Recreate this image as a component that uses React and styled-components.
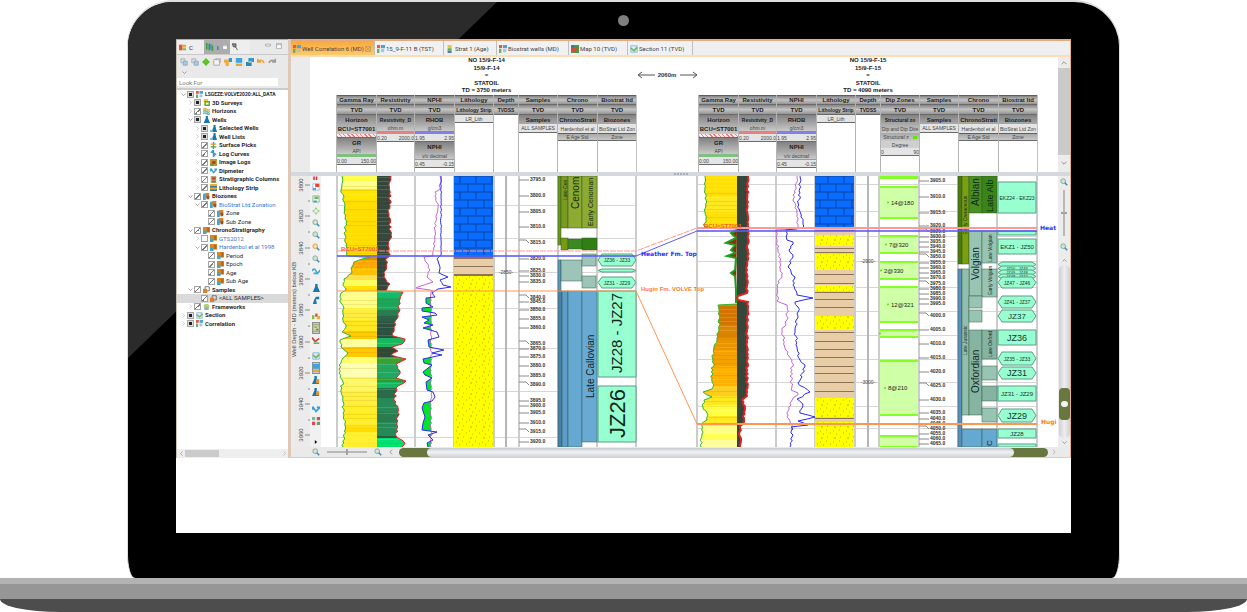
import { useState } from 'react';
import styled, { createGlobalStyle } from 'styled-components';

const GlobalStyle = createGlobalStyle`
  * {
    box-sizing: border-box;
  }
  body {
    margin: 0;
    background: #ffffff;
    color: #202020;
    font-family: "Liberation Sans", Arial, sans-serif;
    font-size: 6px;
  }
  button, input {
    font: inherit;
    color: inherit;
    margin: 0;
    padding: 0;
    border: 0;
    background: none;
    border-radius: 0;
  }
  svg {
    display: block;
  }
`;

/* ---------- laptop ---------- */

const Laptop = styled.div`
  overflow: hidden;
`;

const Lid = styled.div`
  position: relative;
  margin: 0 127px;
  padding: 37px 48px 45px;
  background: #000000;
  border: 1px solid #dedede;
  border-top-width: 2px;
  border-bottom: 0;
  border-radius: 46px 46px 8px 8px / 46px 46px 24px 24px;

  &::before {
    content: '';
    position: absolute;
    inset: 0;
    border-radius: 45px 45px 0 0;
    background: #2b2b2b;
    clip-path: polygon(0 0, 369px 0, 0 356px);
  }
`;

const Camera = styled.div`
  position: absolute;
  top: 13px;
  left: calc(50% - 6px);
  width: 11px;
  height: 11px;
  border-radius: 50%;
  background: #808080;
`;

const Screen = styled.div`
  position: relative;
  min-height: 494px;
  background: #ffffff;
`;

const Base = styled.div`
  height: 34px;
  background: linear-gradient(#b3b3b3 0 6px, #969696 6px 21px, #4d4d4d 21px);
  border-radius: 0 0 60px 60px / 0 0 13px 13px;
`;

/* ---------- application frame ---------- */

const Application = styled.div`
  display: flex;
  overflow: hidden;
`;

const Sidebar = styled.aside`
  flex: 0 0 112px;
  min-width: 0;
  overflow: hidden;
  display: flex;
  flex-direction: column;
  background: #e9e9e9;
  border-top: 1px solid #b9ab9a;
  border-left: 1px solid #c9c0b4;
  font-family: Roboto, "Liberation Sans", sans-serif;
`;

const Main = styled.main`
  flex: 1;
  min-width: 0;
  display: flex;
  flex-direction: column;
  border-left: 3px solid #dfc9b6;
  border-right: 1px solid #e9b080;
  border-bottom: 1px solid #e6cbb4;
`;

const Row = styled.div`
  display: flex;
  height: ${({height}) => height}px;
`;

/* ---------- sidebar ---------- */

const SideTabs = styled.div`
  display: flex;
  height: 15px;
  border-bottom: 1px solid #c9c9c9;
`;

const SideTab = styled.button`
  display: flex;
  align-items: center;
  gap: 3px;
  width: ${({width}) => width}px;
  padding-left: 2px;
  background: ${({active}) => active ? '#adadad' : '#eeeeee'};
`;

const WindowButtons = styled.div`
  margin-left: auto;
  display: flex;
  gap: 3px;
  padding: 2px 5px 0 0;
`;

const IconButton = styled.button`
  display: flex;
  align-items: center;
  justify-content: center;
  flex: 0 0 ${({size}) => size || 10}px;
  height: ${({size}) => size || 10}px;
  background: ${({active}) => active ? '#c8c8c8' : 'transparent'};
  box-shadow: ${({active}) => active ? 'inset 0 0 0 1px #8f8f8f' : 'none'};
`;

const Tools = styled.div`
  display: flex;
  flex-wrap: wrap;
  align-content: flex-start;
  column-gap: 1px;
  height: 23px;
  padding: 2px 1px 0 2px;
`;

const Search = styled.input`
  width: 101px;
  height: 8px;
  padding: 0 2px;
  background: #ffffff;

  &::placeholder {
    color: #777777;
  }
`;

const TreeArea = styled.div`
  flex: 1;
  margin-top: 2px;
  border-top: 2px solid #cccccc;
  background: #ffffff;
`;

const Tree = styled.ul`
  list-style: none;
  margin: 0;
  padding: 0;
  height: 238px;
  display: grid;
  grid-auto-rows: 1fr;
`;

const TreeRow = styled.li`
  display: flex;
  align-items: center;
  padding-left: ${({level}) => 2 + level * 7}px;
  background: ${({selected}) => selected ? '#dadada' : 'transparent'};
`;

const Twisty = styled.button`
  flex: none;
  width: 8px;
  height: 8px;
  display: flex;
  align-items: center;
  justify-content: center;
  visibility: ${({shown}) => shown ? 'visible' : 'hidden'};
`;

const TreeLabel = styled.label`
  display: flex;
  align-items: center;
  gap: 2px;
  white-space: nowrap;
  line-height: 8px;
  font-size: ${({small}) => small ? 5 : 6}px;
  font-weight: ${({strong}) => strong ? 'bold' : 'normal'};
  color: ${({link}) => link ? '#3f78cf' : '#2a2a2a'};
`;

const Check = styled.input`
  appearance: none;
  width: 7px;
  height: 7px;
  border: 1px solid #a5a5a5;
  background: #ffffff;

  &:checked {
    background: linear-gradient(135deg, #ffffff 45%, #777777 45% 60%, #ffffff 60%);
  }

  &:indeterminate {
    background: #222222;
    box-shadow: inset 0 0 0 1px #dddddd;
  }
`;

const SideScroll = styled.div`
  display: flex;
  align-items: center;
  justify-content: space-between;
  height: 9px;
  background: #eeeeee;
`;

const SideThumb = styled.div`
  width: 34px;
  height: 7px;
  margin-right: auto;
  background: #cbcbcb;
`;

/* ---------- editor tabs ---------- */

const EditorTabs = styled.div`
  display: flex;
  height: 16px;
  background: #efefef;
  border-top: 2px solid #e5aa7c;
  font-family: Roboto, "Liberation Sans", sans-serif;
`;

const EditorTab = styled.button`
  display: flex;
  align-items: center;
  gap: 1px;
  flex: 0 0 ${({width}) => width}px;
  padding: 1px 3px 0 2px;
  white-space: nowrap;
  color: #444444;
  border-right: 1px solid #bfbfbf;
  background: ${({active}) => active ? 'linear-gradient(#f7a93c, #ffc96a)' : '#f1f1f1'};
`;

const TabStrip = styled.div`
  height: 2px;
  background: #ffdcb4;
`;

/* ---------- track headers ---------- */

const Gutter = styled.div`
  flex: 0 0 19px;
  background: #ebebeb;
`;

const HeaderTracks = styled.div`
  flex: 1;
  min-width: 0;
  overflow: hidden;
  display: flex;
  padding-left: 26px;
  background: #ffffff;
`;

const WellHeader = styled.section`
  display: flex;
  flex-direction: column;
  flex: none;
`;

const WellTitle = styled.div`
  display: grid;
  grid-auto-rows: 1fr;
  height: 38px;
  text-align: center;
  font-weight: bold;
  line-height: 7px;
`;

const Distance = styled.div`
  flex: 0 0 61px;
  padding-top: 13px;
`;

const Columns = styled.div`
  flex: 1;
  display: flex;
  border-right: 1px solid #c4c4c4;
`;

const Column = styled.div`
  width: ${({width}) => width}px;
  border-left: 1px solid #b4b4b4;
`;

const Cell = styled.div`
  display: flex;
  align-items: center;
  justify-content: ${({split}) => split ? 'space-between' : 'center'};
  height: ${({height}) => height}px;
  overflow: hidden;
  white-space: nowrap;
  background: ${({shade}) => shade};
  border-bottom: ${({edge}) => edge ? '1px solid #6a6a6a' : '0'};
  border-top: ${({top}) => top ? '1px solid #5f5f5f' : '0'};
  font-weight: ${({strong}) => strong ? 'bold' : 'normal'};
  font-size: ${({strong, small}) => strong && !small ? 6 : 5}px;
  color: ${({strong}) => strong ? '#1c1c1c' : '#444444'};
`;

const Splitter = styled.div`
  display: flex;
  justify-content: center;
  align-items: center;
  gap: 1px;
  height: 4px;
  background: #d5d8df;
`;

const Grip = styled.span`
  width: 2px;
  height: 2px;
  background: #a9afba;
`;

/* ---------- rails and bars round the plot ---------- */

const Rail = styled.div`
  flex: 0 0 12px;
  display: flex;
  flex-direction: column;
  align-items: center;
  background: #ececec;
`;

const RailThumb = styled.div`
  width: 12px;
  height: 87px;
  background: #cacaca;
`;

const RailTrack = styled.div`
  display: flex;
  flex-direction: column;
  justify-content: flex-end;
  flex: 1;
  width: 11px;
  padding-bottom: 18px;
  border-radius: 5px;
  background: linear-gradient(90deg, #cfcfd4, #eeeef2, #cfcfd4);
`;

const RailHandle = styled.div`
  display: flex;
  align-items: center;
  justify-content: center;
  height: 32px;
  border-radius: 4px;
  background: #68773f;

  &::before {
    content: '';
    width: 7px;
    height: 6px;
    border-radius: 3px;
    background: #f2f2f2;
  }
`;

const ToolColumn = styled.div`
  flex: 0 0 11px;
  display: flex;
  flex-direction: column;
  align-items: center;
  background: #f1f1f1;
`;

const ToolGap = styled.div`
  height: ${({size}) => size}px;
`;

const Plot = styled.div`
  flex: 1;
  min-width: 0;
  overflow: hidden;
  background: #ffffff;
`;

const BottomBar = styled.div`
  display: flex;
  align-items: center;
  height: 10px;
  padding: 0 10px 0 20px;
  background: #eaeaea;
`;

const Zoom = styled.input`
  appearance: none;
  width: ${({vertical}) => vertical ? 9 : 40}px;
  height: ${({vertical}) => vertical ? 46 : 8}px;
  margin: ${({vertical}) => vertical ? '3px 0' : '0 6px'};
  writing-mode: ${({vertical}) => vertical ? 'vertical-lr' : 'horizontal-tb'};
  background: linear-gradient(#b8b8b8, #b8b8b8) center / ${({vertical}) => vertical ? '2px 100%' : '100% 2px'} no-repeat;

  &::-webkit-slider-thumb {
    appearance: none;
    width: ${({vertical}) => vertical ? 6 : 2}px;
    height: ${({vertical}) => vertical ? 2 : 6}px;
    background: #a2a2a2;
  }
`;

const Scroll = styled.div`
  flex: 1;
  display: flex;
  justify-content: space-between;
  height: 9px;
  border-radius: 5px;
  overflow: hidden;
  background: #68773f;
  padding: 0 34px 0 28px;
`;

const ScrollTrack = styled.div`
  flex: 1;
  border-radius: 5px;
  background: linear-gradient(#c6c9d0, #f1f2f5 45%, #d2d4da);
`;

/* ---------- icons ---------- */

const glyphs = {
  grid: <><path fill="#e05a48" d="M0 0h4v4H0z"/><path fill="#4aa3df" d="M5 0h5v4H5z"/><path fill="#63b35f" d="M0 5h3v5H0z"/><path fill="#9cc7e8" d="M5 5h4v4H5z"/></>,
  correlation: <><path d="M1 0v10M8 0v10" stroke="#3c8ed0" strokeWidth="2"/><path d="M1 2h7M1 6l7-2" stroke="#e0654a" strokeWidth="2"/></>,
  explorer: <><path d="M1 0v8M4 1v8M8 3v7" stroke="#3f9b46" strokeWidth="2"/><path d="M6 1v7" stroke="#4a93c8" strokeWidth="2"/></>,
  data: <><path fill="#e0562d" d="M0 1h5v8H0z"/><path fill="#eda83a" d="M5 1h5v4H5z"/><path fill="#8dba43" d="M5 6h5v3H5z"/></>,
  strat: <><path fill="#f0c341" d="M2 0h5v4H2z"/><path fill="#6eb04c" d="M2 4h5v3H2z"/><path fill="#4a7db8" d="M2 7h5v3H2z"/></>,
  map: <><path fill="#3f9b46" d="M0 0h10v10H0z"/><path fill="#e5482f" d="M3 2l5 3-3 5-5-4z"/><path fill="#3579c5" d="M0 0h4v4H0z"/></>,
  section: <><path fill="#dcebf5" stroke="#7ab2d6" d="M1 1h8v8H1z"/><path d="M1 4l4 3 4-4" fill="none" stroke="#70b85b" strokeWidth="2"/></>,
  surface: <><path fill="#e6f0e4" stroke="#8fb8a0" d="M1 1h8v8H1z"/><path fill="#6fb55a" d="M3 2h5v3H3z"/><path fill="#4f93bd" d="M2 7h4v2H2z"/></>,
  well: <path fill="#1878ae" d="M4 0h3v3l3 7H1l3-7z"/>,
  wellAdd: <><path fill="#1878ae" d="M5 0h3v3l2 7H2l3-7z"/><path fill="#7fbfe0" d="M0 7h4v3H0z"/></>,
  wellMove: <><path fill="#1878ae" d="M5 1h4v3H5l1 6H1l2-6z"/></>,
  wellEdit: <><path fill="#1878ae" d="M3 0h3v3l3 7H0l3-7z"/><path fill="#d6953a" d="M5 4h4v5H5z"/></>,
  survey: <><path fill="#e8cb28" d="M1 0h6v5H1z"/><path fill="none" stroke="#68a81d" strokeWidth="2" d="M3 4h6v5H3z"/></>,
  horizon: <><path d="M0 2q3-2 5 0t5 0" stroke="#e7a33d" strokeWidth="2" fill="none"/><path d="M0 5q3-2 5 0t5 0" stroke="#75bc62" strokeWidth="2" fill="none"/><path d="M0 8q3-2 5 0t5 0" stroke="#52aede" strokeWidth="2" fill="none"/></>,
  picks: <><path d="M5 0v10" stroke="#3d97ca" strokeWidth="2"/><path d="M1 3h8" stroke="#e5a22a" strokeWidth="2"/><path d="M1 7h8" stroke="#57a95d" strokeWidth="2"/></>,
  curve: <path d="M5 0L2 3l6 3-4 4M5 0v10" stroke="#3d94d0" strokeWidth="2" fill="none"/>,
  image: <><path fill="#c79638" d="M0 0h10v10H0z"/><path fill="#a8442d" d="M3 3h5v4H3z"/><path fill="#739b31" d="M0 7h5v3H0z"/></>,
  dip: <path d="M1 2l4 6 5-5M1 2v4M6 3h4" stroke="#32a0db" strokeWidth="2" fill="none"/>,
  column: <><path fill="#b8a47a" d="M1 0h8v10H1z"/><path fill="#bf3c36" d="M3 2h5v3H3z"/><path fill="#5c7c40" d="M3 7h5v2H3z"/></>,
  strip: <><path fill="#e5ae37" d="M0 0h10v10H0z"/><path fill="#41729a" d="M0 3h10v2H0zM0 8h10v2H0z"/></>,
  zone: <><path fill="#43a6d8" d="M0 1h4v9H0z"/><path fill="#d9822d" d="M3 0h6v7H3z"/><path fill="#8a5b32" d="M5 4h4v5H5z"/></>,
  chrono: <><path fill="#da8526" d="M0 0h10v8H0z"/><path fill="#3baac9" d="M0 5h5v5H0z"/><path fill="#b5651e" d="M6 1h3v6H6z"/></>,
  sample: <><path fill="none" stroke="#4c4c4c" d="M3 1h6v6H3z"/><path fill="#d9822d" d="M0 4h6v6H0z"/></>,
  frame: <><circle cx="5" cy="5" r="4" fill="#b8cf74"/><path fill="#7db5cf" d="M2 6h6v4H2z"/></>,
  plus: <path fill="#5fc224" d="M5 0l3 3 2 2-2 2-3 3-3-3-2-2 2-2z"/>,
  page: <path fill="#f5f5f5" stroke="#9b9b9b" d="M1 2h7v7H1zM4 2V0h5v6"/>,
  pages: <><path fill="#d6dfe6" stroke="#a2acb4" d="M1 1h5v5H1z"/><path fill="#a9cbe0" stroke="#83a8bf" d="M4 4h5v5H4z"/></>,
  open: <><path fill="#f0ac3b" d="M0 2h6v4H0zM2 6h4v4H2z"/><path fill="#3597cd" d="M6 0h4v5H6z"/></>,
  save: <><path fill="#3da4dd" d="M1 0h8v6H1z"/><path fill="#e4a83c" d="M1 7h8v3H1z"/></>,
  layers: <><path fill="#3597cd" d="M3 0h7v5H3z"/><path fill="#2f86b4" d="M0 5h7v5H0z"/><path fill="#a9d4a0" d="M3 4h4v2H3z"/></>,
  undo: <path d="M1 5q4-5 8 1M1 1v4h4" stroke="#efa13a" strokeWidth="2" fill="none"/>,
  redo: <path d="M9 5q-4-5-8 1M9 1v4H5" stroke="#9b9b9b" strokeWidth="2" fill="none"/>,
  marks: <path d="M2 1v7M7 1v7" stroke="#dc2c2c" strokeWidth="3"/>,
  redpage: <><path fill="#ffffff" stroke="#a3bdd0" d="M1 1h8v8H1z"/><path fill="#e04733" d="M4 1h5v4H4z"/><path fill="#5aaad6" d="M1 6h4v3H1z"/></>,
  move: <path d="M5 0L3 3h4zM5 10L3 7h4zM0 5l3-2v4zM10 5L7 3v4z" fill="#8fd070"/>,
  zoom: <><circle cx="4" cy="4" r="3" fill="#cfe5d3" stroke="#7fa093"/><path d="M6 6l3 3" stroke="#3b8dbd" strokeWidth="2"/></>,
  zoomFit: <><circle cx="4" cy="4" r="3" fill="#f5d9a8" stroke="#e0a04a"/><path d="M6 6l3 3" stroke="#3b8dbd" strokeWidth="2"/></>,
  wave: <path d="M0 5q3-5 5 0t5-1M2 8h6" stroke="#43a3d8" strokeWidth="2" fill="none"/>,
  bars: <><path fill="#8dba43" d="M0 4h3v5H0z"/><path fill="#d9542d" d="M4 2h3v4H4z"/><path fill="#e9b13b" d="M6 5h4v4H6z"/></>,
  trend: <><path d="M0 2l4 5 5-4" stroke="#cc4433" strokeWidth="2" fill="none"/><path d="M2 9h7" stroke="#63b35f" strokeWidth="2"/></>,
  facies: <><path fill="#c9d8a8" stroke="#8a9a70" d="M1 1h8v8H1z"/><path fill="#d98a4a" d="M3 3h3v2H3z"/><path fill="#5a9a4a" d="M5 6h3v2H5z"/></>,
  squares: <><path fill="#7ab8a0" d="M0 0h4v4H0z"/><path fill="#d8485a" d="M6 0h4v4H6zM0 6h4v4H0z"/><path fill="#63a35f" d="M6 6h4v4H6z"/></>,
  right: <path d="M3 1l4 4-4 4" stroke="#9a9a9a" fill="none" strokeWidth="1"/>,
  left: <path d="M7 1L3 5l4 4" stroke="#666666" fill="none" strokeWidth="1"/>,
  down: <path d="M1 3l4 4 4-4" stroke="#555555" fill="none" strokeWidth="1"/>,
  up: <path d="M1 7l4-4 4 4" stroke="#555555" fill="none" strokeWidth="1"/>,
  min: <path d="M1 2h8v3H1z" stroke="#888888" fill="#ffffff"/>,
  max: <path d="M1 1h8v8H1zM1 3h8" stroke="#888888" fill="#ffffff"/>,
  close: <path d="M1 1h8v8H1zM1 1l8 8M9 1L1 9" stroke="#a98d5e" fill="none"/>,
  pin: <path d="M0 1h5v4H2zM4 4l3 5" stroke="#555555" fill="#888888"/>,
  play: <path d="M2 0l6 5-6 5z" fill="#111111"/>,
};

const Glyph = ({name, size = 8}) => (
  <svg width={size} height={size} viewBox="0 0 10 10" aria-hidden="true">{glyphs[name]}</svg>
);

/* ---------- data ---------- */

// level, label, icon, arrow, state, style
const treeItems = [
  [0, 'LSGEZE:VOLVE2020:ALL_DATA', 'grid', 'down', 'some', 'strong'],
  [1, '3D Surveys', 'survey', 'right', 'some', 'strong'],
  [1, 'Horizons', 'horizon', 'right', 'on', 'strong'],
  [1, 'Wells', 'well', 'down', 'some', 'strong'],
  [2, 'Selected Wells', 'wellAdd', 'right', 'some', 'strong'],
  [2, 'Well Lists', 'wellAdd', 'right', 'some', 'strong'],
  [2, 'Surface Picks', 'picks', 'right', 'on', 'strong'],
  [2, 'Log Curves', 'curve', 'right', 'on', 'strong'],
  [2, 'Image Logs', 'image', 'right', 'on', 'strong'],
  [2, 'Dipmeter', 'dip', 'right', 'on', 'strong'],
  [2, 'Stratigraphic Columns', 'column', 'right', 'on', 'strong'],
  [2, 'Lithology Strip', 'strip', 'right', 'on', 'strong'],
  [1, 'Biozones', 'zone', 'down', 'on', 'strong'],
  [2, 'BioStrat Ltd Zonation', 'zone', 'down', 'on', 'link'],
  [3, 'Zone', 'zone', '', 'on', ''],
  [3, 'Sub Zone', 'zone', '', 'on', ''],
  [1, 'ChronoStratigraphy', 'chrono', 'down', 'on', 'strong'],
  [2, 'GTS2012', 'chrono', 'right', 'off', 'link'],
  [2, 'Hardenbol et al 1998', 'chrono', 'down', 'on', 'link'],
  [3, 'Period', 'chrono', '', 'on', ''],
  [3, 'Epoch', 'chrono', '', 'on', ''],
  [3, 'Age', 'chrono', '', 'on', ''],
  [3, 'Sub Age', 'chrono', '', 'on', ''],
  [1, 'Samples', 'sample', 'down', 'on', 'strong'],
  [2, '<ALL SAMPLES>', 'sample', '', 'on', 'selected'],
  [1, 'Frameworks', 'frame', 'right', 'on', 'strong'],
  [0, 'Section', 'section', 'right', 'some', 'strong'],
  [0, 'Correlation', 'grid', 'right', 'some', 'strong'],
];

const editorTabs = [
  ['Well Correlation 6 (MD)', 'grid', 84],
  ['15_9-F-11 B (TST)', 'grid', 69],
  ['Strat 1 (Age)', 'strat', 53],
  ['Biostrat wells (MD)', 'grid', 72],
  ['Map 10 (TVD)', 'map', 59],
  ['Section 11 (TVD)', 'section', 65],
];

const steel = 'linear-gradient(#858585, #c4c4c4 50%, #959595)';
const dark = 'linear-gradient(#828282, #a9a9a9)';
const mid = 'linear-gradient(#a9a9a9, #c9c9c9)';
const pale = '#e4e4e4';
const hatch = 'repeating-linear-gradient(45deg, #f08080 0 1px, #fbe9e9 1px 3px)';

const head = text => ({text, height: 9, shade: dark, strong: true});
const sub = (text, shade = mid) => ({text, height: 7, shade});
const bar = (color, height = 3) => ({height, shade: color});
const scale = (from, to) => ({text: [from, to], height: 8, shade: pale, edge: true});

const gamma = {width: 40, title: 'Gamma Ray', cells: [
  head('Horizon'), {...head('BCU=ST7001'), shade: mid, height: 10}, {height: 4, shade: hatch, edge: true},
  head('GR'), sub('API'), bar('#7fbf7f'), scale('0.00', '150.00'),
]};
const resistivity = {width: 38, title: 'Resistivity', cells: [
  {...head('Resistivity_D'), small: true}, sub('ohm.m'), bar('#e88080'), scale('0.20', '2000.0'),
]};
const nphi = {width: 40, title: 'NPHI', cells: [
  head('RHOB'), sub('g/cm3'), bar('#8080e8'), scale('1.95', '2.95'),
  {...head('NPHI'), height: 10}, sub('v/v decimal'), bar('#c878d0', 1), scale('0.45', '-0.15'),
]};
const lithology = {width: 39, title: 'Lithology', second: 'Lithology Strip', cells: [{text: 'LR_Lith', height: 8, shade: pale, edge: true}]};
const depth = {width: 25, title: 'Depth', second: 'TVDSS', cells: []};
const samples = {width: 39, title: 'Samples', cells: [head('Samples'), {...sub('ALL SAMPLES', pale), height: 9, edge: true}]};
const chrono = {width: 40, title: 'Chrono', cells: [head('ChronoStrati'), {...sub('Hardenbol et al', pale), height: 9}, {...sub('E  Age  Std'), height: 8, edge: true, top: true}]};
const biostrat = {width: 39, title: 'Biostrat ltd', cells: [head('Biozones'), {...sub('BioStrat Ltd Zon', pale), height: 9}, {...sub('Zone'), height: 8, edge: true, top: true}]};
const dipZones = {width: 39, title: 'Dip Zones', cells: [
  {...head('Structural zo'), small: true}, {...sub('Dip and Dip Dire'), height: 9}, {...sub('Structural z'), height: 8, accent: true}, sub('Degree', '#cfcfcf'), scale('0', '90'),
]};

const wells = [
  {lines: ['NO 15/9-F-14', '15/9-F-14', '=', 'STATOIL', 'TD = 3750 meters'],
    columns: [gamma, resistivity, nphi, lithology, depth, samples, chrono, biostrat]},
  {lines: ['NO 15/9-F-15', '15/9-F-15', '=', 'STATOIL', 'TD = 4090 meters'],
    columns: [gamma, resistivity, nphi, lithology, depth, dipZones, samples, chrono, biostrat]},
];

/* ---------- plot helpers ---------- */

const noise = n => {
  const v = Math.sin(n * 127.1) * 43758.5453;
  return v - Math.floor(v);
};

// adds points between the picks of a log, so that it reads as a measured curve
const roughen = (points, amount, step = 2) => {
  const out = [];
  points.forEach(([x, y], i) => {
    out.push([x, y]);
    const next = points[i + 1];
    if (!next) return;
    const count = Math.floor((next[1] - y) / step);
    for (let k = 1; k < count; k++) {
      const t = k / count;
      out.push([x + (next[0] - x) * t + (noise(y + k) - 0.5) * amount, y + (next[1] - y) * t]);
    }
  });
  return out;
};

const toPath = points => points.map(([x, y]) => `${x.toFixed(1)} ${y.toFixed(1)}`).join(' L');

const Log = ({points, color, width = 1}) => (
  <path d={`M${toPath(points)}`} fill="none" stroke={color} strokeWidth={width}/>
);

// colour bands from a fixed edge up to a curve; bands: [top, colour]
const Filled = ({id, points, edge, bands, bottom = 447}) => (
  <>
    <clipPath id={id}>
      <path d={`M${edge} ${points[0][1]} L${toPath(points)} L${edge} ${points[points.length - 1][1]}Z`}/>
    </clipPath>
    <g clipPath={`url(#${id})`}>
      {bands.map(([y, color], i) => {
        const end = bands[i + 1] ? bands[i + 1][0] : bottom;
        return (
          <g key={y}>
            <rect x={edge - 45} y={y} width="90" height={end - y} fill={color}/>
            {Array.from({length: Math.floor((end - y) / 4)}, (_, k) => (
              <rect key={k} x={edge - 45} y={y + k * 4 + 1} width="90" height="1" fill={noise(y + k) > 0.5 ? '#ffffff' : '#a06000'} opacity="0.14"/>
            ))}
          </g>
        );
      })}
    </g>
  </>
);

const gr1 = roughen([[342, 176], [342, 184], [341, 190], [344, 197], [345, 205], [344, 213], [346, 223], [345, 235], [345, 242], [347, 248], [347, 256], [370, 257.5], [362, 259], [354, 262], [351, 268], [352, 273], [344, 279], [343, 284], [346, 290], [341, 293], [341, 303], [344, 308], [343, 314], [343, 320], [346, 327], [342, 332], [351, 336], [340, 340], [341, 347], [348, 353], [343, 358], [341, 363], [339, 373], [343, 382], [341, 390], [343, 397], [343, 413], [345, 423], [344, 437], [343, 447]], 3);
const gr1Bands = [[176, '#ffff50'], [181, '#ffff85'], [189, '#ffe800'], [200, '#ffdd00'], [257, '#e08a00'], [260, '#ffa500'], [268, '#ffc000'], [275, '#ffe040'], [280, '#ffff60'], [286, '#ffe000'], [291, '#ffff88'], [308, '#ffee40'], [320, '#ffe820'], [331, '#ffcc00'], [339, '#ffff98'], [347, '#ffc800'], [357, '#ffff70'], [363, '#ffffb0'], [377, '#fff860'], [391, '#fff040'], [405, '#ffee20'], [425, '#ffdd00'], [432, '#ffee30']];

const res1 = roughen([[391, 176], [389, 184], [390, 200], [389, 215], [391, 235], [389, 250], [389, 257], [387, 258], [386, 270], [384, 277], [390, 284], [387, 289], [386, 291], [403, 292], [400, 299], [398, 306], [399, 312], [396, 320], [394, 327], [393, 336], [405, 339], [402, 344], [392, 347], [398, 351], [391, 355], [406, 359], [396, 364], [400, 371], [396, 378], [406, 381], [398, 386], [396, 392], [394, 400], [398, 408], [397, 425], [396, 436], [402, 440], [405, 443], [402, 447]], 3);
const res1Bands = [[176, '#34473a'], [291, '#12bb68'], [298, '#1fa45c'], [310, '#287c50'], [316, '#2c6046'], [322, '#2c5040'], [338, '#18b860'], [347, '#2d4a3a'], [357, '#3aa030'], [363, '#1fa860'], [378, '#309838'], [382, '#18b860'], [388, '#2a6a48'], [398, '#258a58'], [412, '#287c50'], [422, '#258a58'], [436, '#2a5a44'], [438, '#00e070']];

const nphi1 = roughen([[440, 176], [441, 180], [439, 190], [435, 192], [436, 198], [438, 207], [436, 217], [435, 230], [435, 240], [433, 252], [433, 256], [424, 257], [427, 263], [430, 270], [427, 277], [433, 282], [418, 287], [416, 288], [430, 290], [433, 291], [431, 292], [431, 447]], 2);
const rhob1Top = roughen([[441, 176], [441, 255], [437, 259], [440, 267], [439, 273], [448, 277], [440, 280], [443, 285], [451, 287], [438, 289], [432, 293]], 1);
const rhob1Low = [[432, 293], [435, 297], [426, 298], [426, 303], [433, 307], [422, 308], [422, 311], [435, 313], [437, 315], [422, 317], [429, 320], [424, 323], [433, 325], [423, 328], [437, 332], [439, 337], [428, 340], [429, 347], [444, 350], [432, 353], [442, 355], [423, 359], [424, 363], [432, 365], [423, 372], [425, 375], [432, 378], [426, 382], [427, 390], [433, 392], [435, 397], [432, 401], [424, 403], [422, 408], [425, 417], [423, 423], [422, 430], [437, 432], [428, 435], [433, 440], [427, 443], [428, 447]];

const gr2Top = roughen([[705, 176], [705, 190], [706, 200], [705, 212], [706, 220], [704, 226], [712, 228], [737, 229]], 2);
const gr2Mid = [[737, 230], [731, 233], [736, 238], [732, 240], [726, 243], [735, 245], [731, 250], [735, 253], [727, 256], [736, 258], [735, 270], [731, 273], [735, 276], [736, 290], [736, 303]];
const gr2Low = roughen([[737, 304], [718, 305], [719, 312], [719, 330], [717, 338], [714, 347], [713, 360], [712, 378], [712, 389], [703, 392], [712, 397], [704, 400], [703, 407], [708, 415], [707, 420], [701, 424], [702, 434], [701, 447]], 3);
const gr2Bands = [[304, '#d27400'], [325, '#dc8400'], [338, '#e99500'], [350, '#f5a200'], [366, '#ffb000'], [386, '#ffcc20'], [396, '#ffe820'], [405, '#ffff40'], [416, '#ffe820'], [424, '#ffff88'], [434, '#ffff55'], [440, '#ffffa0']];
const res2 = roughen([[748, 176], [747, 200], [748, 230], [748, 250], [747, 270], [747, 293], [738, 296], [738, 300], [748, 302], [747, 330], [747, 360], [747, 396], [742, 400], [745, 408], [743, 416], [744, 422], [740, 426], [740, 447]], 2);
const nphi2 = roughen([[797, 176], [796, 187], [793, 195], [795, 203], [797, 210], [797, 229], [776, 230], [777, 240], [778, 250], [780, 263], [782, 277], [777, 285], [777, 301], [787, 305], [787, 320], [782, 330], [785, 348], [792, 360], [791, 390], [798, 393], [790, 403], [787, 417], [792, 425], [791, 430]], 3);
const rhob2 = roughen([[800, 176], [800, 193], [798, 203], [801, 217], [803, 222], [803, 228], [786, 230], [787, 240], [793, 242], [789, 250], [793, 257], [788, 267], [795, 277], [793, 285], [797, 295], [813, 298], [795, 302], [798, 307], [798, 312], [795, 330], [797, 347], [800, 360], [805, 367], [798, 383], [810, 392], [797, 399], [803, 405], [800, 413], [815, 417], [798, 421], [808, 425], [791, 427], [793, 435], [790, 447]], 3);

const labels1 = [179, 195, 211, 226, 242, 258, 270, 275, 281, 297, 301, 309, 318, 327, 343, 348, 356, 365, 375, 384, 400, 405, 412, 422, 431, 441];
const labels2 = [180, 196, 212, 225, 231, 236, 241, 246, 251, 256, 262, 267, 272, 277, 283, 288, 293, 298, 303, 315, 329, 343, 357, 371, 385, 399, 412, 418, 423, 428, 433, 438, 443];

// x, top, width, bottom, fill
const chronoBlocks = [
  [558, 176, 3, 245, '#6a9a10'], [561, 176, 7, 228, '#7a9a20'], [568, 176, 14, 228, '#8cab30'], [582, 176, 15, 228, '#8cab30'],
  [561, 238, 7, 250, '#789a10'], [568, 239, 14, 249, '#3a8a20'], [582, 238, 15, 250, '#2f7f14'],
  [558, 260, 3, 291, '#5a9ac4'], [561, 260, 21, 281, '#9cc4b8'], [582, 254, 14, 266, '#9cc4b8'], [582, 276, 14, 288, '#9cc4b8'],
  [558, 291, 4, 447, '#4a80a8'], [562, 291, 6, 447, '#5c9cc8'], [568, 291, 14, 447, '#65a8d2'], [582, 291, 15, 442, '#68aad4'],
  [958, 176, 4, 264, '#4a7a10'], [962, 176, 7, 264, '#7aa010'], [969, 176, 13, 213, '#4a9020'], [982, 176, 15, 213, '#3a8518'],
  [969, 231, 13, 296, '#98c4b4'], [982, 231, 15, 263, '#98c4b4'], [982, 269, 15, 297, '#98c4b4'],
  [958, 269, 4, 447, '#5a90c0'], [962, 269, 7, 415, '#90bfae'], [969, 296, 13, 308, '#98c4b4'], [969, 310, 13, 322, '#98c4b4'],
  [969, 330, 13, 415, '#86b4a2'], [982, 330, 15, 359, '#86b4a2'], [982, 366, 15, 380, '#98c4b4'], [982, 386, 15, 401, '#86b4a2'], [982, 408, 15, 422, '#98c4b4'],
  [962, 429, 20, 447, '#65a8d2'], [982, 429, 15, 447, '#65a8d2'],
];

// x, top, bottom, lozenge, label, size
const biozones = [
  [598, 254, 266, true, 'JZ36 - JZ33', 5], [598, 269, 272, true], [598, 277, 288, true, 'JZ31 - JZ29', 5],
  [598, 291, 377, false], [598, 386, 442, false],
  [998, 182, 213, false, 'EKZ24 - EKZ23', 5], [998, 231, 235, false], [998, 239, 254, false, 'EKZ1 - JZ50', 6],
  [998, 262, 267, true], [998, 266, 271, true, 'JZ50 - JZ49', 4], [998, 270, 275, true, 'JZ49 - JZ48', 4], [998, 274, 279, true, 'JZ48 - JZ47', 4],
  [998, 277, 288, true, 'JZ47 - JZ46', 5], [998, 296, 308, true, 'JZ41 - JZ37', 5], [998, 310, 322, true, 'JZ37', 8],
  [998, 330, 345, false, 'JZ36', 9], [998, 352, 365, true, 'JZ35 - JZ33', 5], [998, 367, 379, true, 'JZ31', 9],
  [998, 386, 401, false, 'JZ31 - JZ29', 6], [998, 409, 422, true, 'JZ29', 9], [998, 429, 438, false, 'JZ28', 6], [998, 444, 447, false],
];

const verticalTexts = [
  [567, 200, 5, 'Late Cen'], [579, 209, 10, 'Cenom'], [593, 226, 7, 'Early Cenoman'], [594, 398, 10, 'Late Callovian'],
  [622, 373, 15, 'JZ28 - JZ27'], [625, 438, 22, 'JZ26'],
  [967, 234, 5, 'Early Cretaceous'], [979, 206, 10, 'Albian'], [993, 212, 9, 'Late Alb'],
  [979, 280, 10, 'Volgian'], [992, 262, 5, 'Late Volgian'], [992, 295, 5, 'Early Volgian'], [979, 393, 10, 'Oxfordian'],
  [967, 355, 5, 'Late Jurassic'], [992, 357, 5, 'Late Oxford'], [992, 446, 8, 'C'],
];

const dipBlocks = [[176, 179], [186, 219, '14@180', 891], [235, 254, '7@320', 889], [261, 280, '2@330', 884], [286, 323, '12@321', 891], [329, 338, '', 883], [360, 416, '8@210', 888], [435, 448]];

const Sand = ({x, top, bottom}) => <rect x={x} y={top} width="39" height={bottom - top} fill="url(#sand)"/>;

const Lithology = ({x, limeEnd, tan, yellow, lines}) => (
  <g>
    <rect x={x} y="176" width="39" height={limeEnd - 176} fill="url(#brick)"/>
    {tan.map(([top, bottom]) => <rect key={top} x={x} y={top} width="39" height={bottom - top} fill="#e8cda6"/>)}
    {yellow.map(([top, bottom]) => <Sand key={top} x={x} top={top} bottom={bottom}/>)}
    {lines.map(y => <rect key={y} x={x} y={y} width="39" height="1" fill="#8c7458"/>)}
  </g>
);

const SampleLabels = ({x, values, start}) => (
  <g fontSize="5" fontWeight="bold" fill="#333333">
    {values.map((y, i) => (
      <g key={y}>
        <path d={`M${x} ${y + (i % 5 === 4 ? -2 : 1)}h7l3 ${i % 5 === 4 ? 3 : 0}`} stroke="#888888" fill="none"/>
        <text x={x + 11} y={y + 2}>{(start + i * 5).toFixed(1)}</text>
      </g>
    ))}
  </g>
);

const Biozone = ({zone: [x, top, bottom, lozenge, label, size]}) => {
  const middle = (top + bottom) / 2;
  const shape = lozenge
    ? `M${x} ${middle}L${x + 4} ${top}H${x + 34}L${x + 38} ${middle}L${x + 34} ${bottom}H${x + 4}Z`
    : `M${x} ${top}h38V${bottom}h-38Z`;
  return (
    <g>
      <path d={shape} fill="#98ffd0" stroke="#5d9c86"/>
      {label && <text x={x + 19} y={middle + Math.round(size / 3)} fontSize={size} textAnchor="middle" fill="#12352b">{label}</text>}
    </g>
  );
};

const CorrelationPlot = () => (
  <svg width="100%" height="271" viewBox="321 176 737 271" preserveAspectRatio="xMinYMin meet" role="img" aria-label="Well correlation">
    <defs>
      <pattern id="brick" width="16" height="16" x="454" y="183" patternUnits="userSpaceOnUse">
        <rect width="16" height="16" fill="#0a6cff"/>
        <path d="M0 1h16M0 9h16M14 1v8M6 9v7" stroke="#06429e" strokeWidth="1"/>
      </pattern>
      <pattern id="sand" width="13" height="11" patternUnits="userSpaceOnUse">
        <rect width="13" height="11" fill="#ffff00"/>
        <path d="M1 2h1M7 1h1M4 5h1M11 4h1M8 8h1M2 9h2" stroke="#b8b010"/>
      </pattern>
      <clipPath id="gasClip"><rect x="415" y="291" width="16" height="156"/></clipPath>
    </defs>

    <g stroke="#d6d6d6">
      {[205, 238, 272, 308, 348, 391, 437].map(y => <path key={y} d={`M336 ${y}.5H636`}/>)}
      {[184, 211, 236, 261, 287, 311, 335, 359, 382, 406, 428].map(y => <path key={y} d={`M697 ${y}.5H1037`}/>)}
    </g>
    <g stroke="#cccccc" strokeWidth="2">
      {[337, 415, 454, 494, 519, 558, 597, 636, 697, 776, 815, 855, 879, 919, 958, 997, 1037].map(x => <path key={x} d={`M${x} 176v271`}/>)}
    </g>
    <path d="M506 176v271M868 176v271" stroke="#b5b5b5" strokeWidth="2"/>

    <Filled id="gr1" points={gr1} edge={377} bands={gr1Bands}/>
    <Log points={gr1} color="#35b52c"/>
    <Filled id="res1" points={res1} edge={377} bands={res1Bands}/>
    <Log points={res1} color="#ee2020"/>
    <path d={`M431 293 L${toPath(rhob1Low)} L431 447Z`} fill="#00e428" clipPath="url(#gasClip)"/>
    <Log points={nphi1} color="#c566d4"/>
    <Log points={rhob1Top} color="#2a2af5"/>
    <Log points={rhob1Low} color="#2a2af5"/>
    <Lithology x={454} limeEnd={257} tan={[[257, 276]]} yellow={[[276, 447]]} lines={[257, 258, 266, 274, 275]}/>

    <Filled id="gr2top" points={gr2Top} edge={737} bands={[[176, '#ffdf08'], [196, '#ffe820'], [212, '#ffdf08']]} bottom={230}/>
    <Log points={gr2Top} color="#35b52c"/>
    <path d={`M${toPath(gr2Mid)}Z`} fill="#8a3208"/>
    <Log points={gr2Mid} color="#239a23" width={2}/>
    <Filled id="gr2low" points={gr2Low} edge={737} bands={gr2Bands}/>
    <Log points={gr2Low} color="#35b52c"/>
    <path d={`M737 176 L${toPath(res2)} L737 447Z`} fill="#34473a"/>
    <Log points={res2} color="#e32020" width={2}/>
    <Log points={nphi2} color="#c566d4"/>
    <Log points={rhob2} color="#2a2af5"/>
    <Lithology
      x={815}
      limeEnd={229}
      tan={[[229, 235], [246, 254], [270, 285], [291, 316], [330, 398], [417, 422]]}
      yellow={[[235, 246], [254, 270], [285, 291], [316, 330], [398, 417], [422, 447]]}
      lines={[230, 248, 252, 274, 283, 292, 299, 307, 332, 341, 349, 357, 366, 373, 382, 391, 418]}
    />

    <g fontSize="5" textAnchor="middle" fill="#444444">
      <text x="506" y="274">-2850-</text>
      <text x="868" y="263">-2900-</text>
      <text x="868" y="384">-3000-</text>
    </g>

    {dipBlocks.map(([top, bottom, label, x]) => (
      <g key={top}>
        <rect x="880" y={top} width="38" height={bottom - top} fill="#cfffa6"/>
        <path d={`M880 ${top + 1}h38M880 ${bottom - 1}h38`} stroke="#86ff26" strokeWidth="2"/>
        {x && <circle cx={x - 3} cy={(top + bottom) / 2} r="1" fill="#4ce600"/>}
        {label && <text x={x} y={(top + bottom) / 2 + 2} fontSize="6" fill="#222222">{label}</text>}
      </g>
    ))}

    <SampleLabels x={519} values={labels1} start={3795}/>
    <SampleLabels x={919} values={labels2} start={3905}/>

    {chronoBlocks.map(([x, top, width, bottom, fill]) => (
      <rect key={`${x}-${top}`} x={x} y={top} width={width} height={bottom - top} fill={fill} stroke="#2c4c34" strokeOpacity="0.45"/>
    ))}
    {biozones.map(zone => <Biozone key={`${zone[0]}-${zone[1]}`} zone={zone}/>)}
    <g fill="#12281c">
      {verticalTexts.map(([x, y, size, text]) => (
        <text key={`${x}-${y}`} x={x} y={y} fontSize={size} transform={`rotate(-90 ${x} ${y})`}>{text}</text>
      ))}
    </g>

    <g fill="none">
      <path d="M337 251H636L697 228H1037" stroke="#ff9a92" strokeDasharray="6 1"/>
      <path d="M697 228H1037" stroke="#ff9a92" strokeWidth="2"/>
      <path d="M337 256H636" stroke="#5c5cf5" strokeWidth="2" strokeOpacity="0.8"/>
      <path d="M636 256L697 231" stroke="#5c5cf5"/>
      <path d="M697 231H1037" stroke="#5c5cf5" strokeWidth="2" strokeOpacity="0.8"/>
      <path d="M337 291H636L697 424" stroke="#ff9650"/>
      <path d="M697 424H1037" stroke="#ff9650" strokeWidth="2"/>
    </g>
    <g fontSize="6" fontFamily="DejaVu Sans, sans-serif" fontWeight="bold">
      <g fill="#ff5a28" fontFamily="Liberation Sans, sans-serif">
        <text x="341" y="251">BCU=ST7001</text>
        <text x="704" y="228">BCU=ST7001</text>
      </g>
      <text x="641" y="256" fill="#3030f0">Heather Fm. Top</text>
      <text x="1040" y="230" fill="#3030f0">Heat</text>
      <g fill="#ff7a2a">
        <text x="641" y="291" fontFamily="Liberation Sans, sans-serif">Hugin Fm. VOLVE Top</text>
        <text x="1041" y="424">Hugi</text>
      </g>
    </g>
  </svg>
);

const DepthRuler = () => (
  <svg width="19" height="271" viewBox="291 176 19 271" role="img" aria-label="Depth scale">
    <g fontSize="6" fill="#444444">
      <text x="296" y="357" transform="rotate(-90 296 357)">Well Depth - MD (meters) below KB</text>
      {Array.from({length: 9}, (_, i) => {
        const y = 185 + Math.round(i * 31.3);
        return (
          <g key={y}>
            <text x="303" y={y} textAnchor="middle" transform={`rotate(-90 303 ${y})`}>{3800 + i * 20}</text>
            <path d={`M305 ${y}h5M308 ${y + 16}h2`} stroke="#888888"/>
          </g>
        );
      })}
    </g>
  </svg>
);

/* ---------- components ---------- */

const TreeItem = ({item: [level, text, icon, arrow, state, look]}) => {
  const [checked, setChecked] = useState(state === 'on');

  return (
    <TreeRow level={level} selected={look === 'selected'}>
      <Twisty shown={Boolean(arrow)} aria-label={`Toggle ${text}`}>
        <Glyph name={arrow || 'right'} size={5}/>
      </Twisty>
      <TreeLabel strong={look === 'strong'} link={look === 'link'} small={text.length > 24}>
        <Check
          type="checkbox"
          checked={checked}
          ref={node => { if (node) node.indeterminate = state === 'some'; }}
          onChange={() => setChecked(prevState => !prevState)}
        />
        <Glyph name={icon} size={7}/>
        {text}
      </TreeLabel>
    </TreeRow>
  );
};

const Explorer = () => (
  <Sidebar>
    <SideTabs role="tablist">
      <SideTab width={27} role="tab"><Glyph name="data" size={7}/>C</SideTab>
      <SideTab width={26} role="tab" active><Glyph name="explorer"/>I<Glyph name="max" size={6}/></SideTab>
      <SideTab width={20} role="tab" aria-label="Pinned"><Glyph name="pin"/></SideTab>
      <WindowButtons>
        <IconButton size={8} aria-label="Minimize"><Glyph name="min" size={6}/></IconButton>
        <IconButton size={8} aria-label="Maximize"><Glyph name="max" size={6}/></IconButton>
      </WindowButtons>
    </SideTabs>
    <Tools>
      {['pages', 'pages', 'plus', 'page', 'open', 'save', 'layers', 'undo', 'redo', 'down'].map((name, i) => (
        <IconButton key={i} size={10} aria-label={name}><Glyph name={name} size={name === 'down' ? 5 : 8}/></IconButton>
      ))}
    </Tools>
    <Search type="text" placeholder="Look For" aria-label="Look For"/>
    <TreeArea>
      <Tree>
        {treeItems.map(item => <TreeItem key={item[1]} item={item}/>)}
      </Tree>
    </TreeArea>
    <SideScroll>
      <IconButton size={8} aria-label="Scroll left"><Glyph name="left" size={5}/></IconButton>
      <SideThumb/>
      <IconButton size={8} aria-label="Scroll right"><Glyph name="right" size={5}/></IconButton>
    </SideScroll>
  </Sidebar>
);

const Accent = styled.span`
  width: 4px;
  height: 3px;
  margin-left: 4px;
  background: #5fe600;
`;

const TrackColumn = ({column}) => (
  <Column width={column.width}>
    <Cell height={10} shade={steel} strong edge top>{column.title}</Cell>
    <Cell height={10} shade={steel} strong edge small={Boolean(column.second)}>{column.second || 'TVD'}</Cell>
    {column.cells.map(({text, height, shade, strong, small, edge, top, accent}, i) => (
      <Cell key={i} height={height} shade={shade} strong={strong} small={small} edge={edge} top={top} split={Array.isArray(text)}>
        {Array.isArray(text) ? text.map(value => <span key={value}>{value}</span>) : text}
        {accent && <Accent/>}
      </Cell>
    ))}
  </Column>
);

const Well = ({well}) => (
  <WellHeader>
    <WellTitle>
      {well.lines.map((line, i) => <div key={i}>{line}</div>)}
    </WellTitle>
    <Columns>
      {well.columns.map(column => <TrackColumn key={column.title} column={column}/>)}
    </Columns>
  </WellHeader>
);

// numbers are gaps between groups of tools, a star marks a pressed tool
const plotTools = ['redpage', 'surface', 'move', 'zoom', 'zoom', 'zoomFit', 'zoom', 'wave', 5, 'well', 'wellMove', 4, 'bars', 'facies*', 'trend', 4, 'section', 'save*', 'wellEdit', 'wellEdit', 5, 'dip', 'squares'];

const Editor = () => {
  const [activeTab, setActiveTab] = useState(0);

  return (
    <Main>
      <EditorTabs role="tablist">
        {editorTabs.map(([text, icon, width], i) => (
          <EditorTab key={text} role="tab" width={width} active={i === activeTab} onClick={() => setActiveTab(i)}>
            <Glyph name={icon}/>
            {text}
            {i === 0 && <Glyph name="close" size={6}/>}
          </EditorTab>
        ))}
      </EditorTabs>
      <TabStrip/>
      <Row height={115}>
        <Gutter/>
        <HeaderTracks>
          <Well well={wells[0]}/>
          <Distance>
            <svg width="61" height="10" viewBox="0 0 61 10">
              <path d="M1 5h17M43 5h17M5 2L1 5l4 3M56 2l4 3-4 3" stroke="#555555" fill="none"/>
              <text x="30" y="7" fontSize="6" fontWeight="bold" textAnchor="middle" fill="#333333">2060m</text>
            </svg>
          </Distance>
          <Well well={wells[1]}/>
        </HeaderTracks>
        <Rail>
          <IconButton size={11} aria-label="Scroll up"><Glyph name="up" size={6}/></IconButton>
          <RailThumb/>
          <IconButton size={16} aria-label="Scroll down"><Glyph name="down" size={6}/></IconButton>
        </Rail>
      </Row>
      <Splitter>
        {[0, 1, 2, 3, 4].map(i => <Grip key={i}/>)}
      </Splitter>
      <Row height={271}>
        <Gutter><DepthRuler/></Gutter>
        <ToolColumn>
          <Glyph name="marks" size={5}/>
          {plotTools.map((tool, i) => typeof tool === 'number'
            ? <ToolGap key={i} size={tool}/>
            : (
              <IconButton key={i} size={12} active={tool.endsWith('*')} aria-label={tool.replace('*', '')}>
                <Glyph name={tool.replace('*', '')}/>
              </IconButton>
            ))}
          <ToolGap size={13}/>
          <Glyph name="play" size={4}/>
        </ToolColumn>
        <Plot><CorrelationPlot/></Plot>
        <Rail>
          <IconButton size={11} aria-label="Zoom in"><Glyph name="zoom"/></IconButton>
          <Zoom type="range" vertical aria-label="Vertical zoom"/>
          <IconButton size={16} aria-label="Zoom out"><Glyph name="zoom"/></IconButton>
          <IconButton size={10} aria-label="Scroll up"><Glyph name="up" size={5}/></IconButton>
          <RailTrack><RailHandle/></RailTrack>
          <IconButton size={9} aria-label="Scroll down"><Glyph name="down" size={5}/></IconButton>
        </Rail>
      </Row>
      <BottomBar>
        <IconButton size={10} aria-label="Zoom in"><Glyph name="zoom"/></IconButton>
        <Zoom type="range" aria-label="Horizontal zoom"/>
        <IconButton size={10} aria-label="Zoom out"><Glyph name="zoom"/></IconButton>
        <IconButton size={16} aria-label="Scroll left"><Glyph name="left" size={6}/></IconButton>
        <Scroll><ScrollTrack/></Scroll>
        <IconButton size={12} aria-label="Scroll right"><Glyph name="right" size={6}/></IconButton>
      </BottomBar>
    </Main>
  );
};

const App = () => (
  <Laptop>
    <GlobalStyle/>
    <Lid>
      <Camera/>
      <Screen>
        <Application>
          <Explorer/>
          <Editor/>
        </Application>
      </Screen>
    </Lid>
    <Base/>
  </Laptop>
);

export default App;
